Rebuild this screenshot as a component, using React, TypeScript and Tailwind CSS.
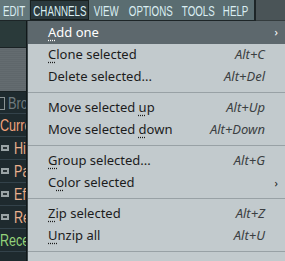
import React from 'react';

type Item =
  | { kind: 'item'; label: React.ReactNode; shortcut?: string; sub?: boolean; active?: boolean }
  | { kind: 'sep' };

const U = ({ children }: { children: React.ReactNode }) => (
  <span className="underline decoration-dotted underline-offset-[3px]">{children}</span>
);

const items: Item[] = [
  { kind: 'item', label: <><U>A</U>dd one</>, sub: true, active: true },
  { kind: 'item', label: <><U>C</U>lone selected</>, shortcut: 'Alt+C' },
  { kind: 'item', label: <>Delete selected...</>, shortcut: 'Alt+Del' },
  { kind: 'sep' },
  { kind: 'item', label: <>Move selected <U>u</U>p</>, shortcut: 'Alt+Up' },
  { kind: 'item', label: <>Move selected <U>d</U>own</>, shortcut: 'Alt+Down' },
  { kind: 'sep' },
  { kind: 'item', label: <><U>G</U>roup selected...</>, shortcut: 'Alt+G' },
  { kind: 'item', label: <>C<U>o</U>lor selected</>, sub: true },
  { kind: 'sep' },
  { kind: 'item', label: <><U>Z</U>ip selected</>, shortcut: 'Alt+Z' },
  { kind: 'item', label: <><U>U</U>nzip all</>, shortcut: 'Alt+U' },
  { kind: 'sep' },
];

const tabs = [
  { t: 'EDIT', w: 'w-[29px] bg-[#63777b]' },
  { t: 'CHANNELS', w: 'w-[59px] ml-[1px] bg-[#2b393d] border border-[#18201f]' },
  { t: 'VIEW', w: 'w-[35px]' },
  { t: 'OPTIONS', w: 'w-[53px]' },
  { t: 'TOOLS', w: 'w-[42px]' },
  { t: 'HELP', w: 'w-[34px]' },
];

const side: { text: string; color: string; icon?: boolean }[] = [
  { text: 'Curre', color: 'text-[#f2a27c]' },
  { text: 'His', color: 'text-[#eab08c]', icon: true },
  { text: 'Pa', color: 'text-[#eab08c]', icon: true },
  { text: 'Eff', color: 'text-[#eab08c]', icon: true },
  { text: 'Re', color: 'text-[#eab08c]', icon: true },
  { text: 'Rece', color: 'text-[#94d27a]' },
];

export default function App() {
  return (
    <div className="w-[285px] h-[261px] overflow-hidden bg-[#4a5457] flex flex-col font-['Noto_Sans',sans-serif]">
      {/* menu bar */}
      <div className="h-[21px] flex shrink-0">
        <div className="flex items-stretch bg-[#5a6d71] border-r-2 border-b border-[#1d2527] font-['Liberation_Sans',sans-serif] text-[15px] leading-none text-[#dbeef2]">
          {tabs.map((tab) => (
            <div key={tab.t} className={`flex items-center justify-center overflow-hidden ${tab.w}`}>
              <span className="inline-block scale-x-[0.65] whitespace-nowrap">{tab.t}</span>
            </div>
          ))}
          <div className="w-[1px]" />
        </div>
        <div className="flex-1 bg-[#4a5457] border-b border-[#343c3e]" />
      </div>

      <div className="flex flex-1 min-h-0">
        {/* left panel */}
        <div className="w-[27px] shrink-0 bg-[#1e2a2e] border-r border-[#11181a] flex flex-col overflow-hidden font-['Liberation_Sans',sans-serif]">
          <div className="h-[26px] shrink-0 bg-[#2a3a3a]" />
          <div className="h-[45px] shrink-0 bg-[repeating-linear-gradient(180deg,#5a6266_0px,#6e767a_1px,#50585c_2px)] border-y border-[#1a2224]" />
          <div className="h-[4px] shrink-0" />
          <div className="h-[15px] shrink-0 flex items-center gap-[3px]">
            <div className="w-[5px] h-[13px] border border-[#8a9294] border-l-0 shrink-0" />
            <span className="inline-block origin-left scale-x-[0.8] text-[16px] leading-none text-[#6f7a7e] whitespace-nowrap">Brow</span>
          </div>
          <div className="h-[2px] shrink-0" />
          {side.map((s) => (
            <div key={s.text} className="h-[23px] shrink-0 flex items-center gap-[3px] border-t border-[#33424a] whitespace-nowrap">
              {s.icon ? (
                <svg width="10" height="10" viewBox="0 0 10 10" className="shrink-0 ml-[1px]">
                  <rect x="0" y="2" width="8" height="6" fill="#9aa4a6" />
                  <rect x="2" y="4" width="4" height="2" fill="#2b3538" />
                </svg>
              ) : null}
              <span className={`inline-block origin-left scale-x-[0.74] text-[17px] leading-none ${s.color}`}>
                {s.text}
              </span>
            </div>
          ))}
          <div className="h-[20px] shrink-0 border-t border-[#33424a] flex items-end">
            <div className="w-[12px] h-[3px] bg-[#c06060] ml-[8px]" />
          </div>
        </div>
        <div className="w-[1px] bg-[#3a4447]" />

        {/* dropdown */}
        <div className="flex-1 min-w-0 bg-[#c2cacd] flex flex-col text-[13px] text-[#1c1c1c]">
          {items.map((it, i) =>
            it.kind === 'sep' ? (
              <div key={i} className="h-[9px] shrink-0 flex items-center">
                <div className="h-px w-full bg-[#98a1a5]" />
              </div>
            ) : (
              <div
                key={i}
                className={`${it.active ? 'h-[23px] bg-[#5d686d] text-white' : 'h-[22px]'} shrink-0 flex items-center pl-[20px] whitespace-nowrap`}
              >
                <span className="flex-1">{it.label}</span>
                {it.shortcut ? (
                  <span className="italic text-[#3b3f42] pr-[20px]">{it.shortcut}</span>
                ) : null}
                {it.sub ? (
                  <span className={`pr-[7px] text-[11px] ${it.active ? 'text-white' : 'text-[#1c1c1c]'}`}>›</span>
                ) : null}
              </div>
            )
          )}
        </div>
      </div>
    </div>
  );
}
